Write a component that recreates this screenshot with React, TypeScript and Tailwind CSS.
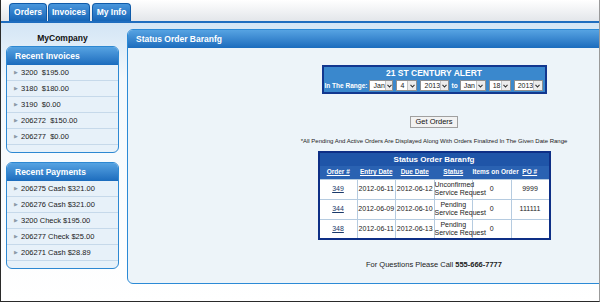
import React from 'react';

const invoices = ['3200  $195.00', '3180  $180.00', '3190  $0.00', '206272  $150.00', '206277  $0.00'];
const payments = [
  '206275 Cash $321.00',
  '206276 Cash $321.00',
  '3200 Check $195.00',
  '206277 Check $25.00',
  '206271 Cash $28.89',
];

const orders = [
  { id: '349', entry: '2012-06-11', due: '2012-06-12', status: ['Unconfirmed', 'Service Request'], items: '0', po: '9999' },
  { id: '344', entry: '2012-06-09', due: '2012-06-10', status: ['Pending', 'Service Request'], items: '0', po: '111111' },
  { id: '348', entry: '2012-06-11', due: '2012-06-13', status: ['Pending', 'Service Request'], items: '0', po: '' },
];

const SideBox: React.FC<{ title: string; items: string[] }> = ({ title, items }) => (
  <div className="rounded-[6px] border border-[#2d88d2] bg-[#e7f1f9] overflow-hidden">
    <div className="h-[18px] bg-linear-to-b from-[#56a3e2] to-[#1b6cbd] text-white font-bold text-[8.5px] leading-[18px] pl-[8px]">
      {title}
    </div>
    {items.map((item) => (
      <div key={item} className="h-[16px] border-b border-[#c6d9ea] flex items-center pl-[7px] text-[7.5px] text-[#1a1a1a] whitespace-pre">
        <span className="text-[#8c9aa6] text-[5px] mr-[3px]">▶</span>
        {item}
      </div>
    ))}
    <div className="h-[7px]" />
  </div>
);

const Select: React.FC<{ value: string; w: string }> = ({ value, w }) => (
  <span className={`${w} shrink-0 h-[11px] bg-white border border-[#8f8f8f] flex items-center text-[7px] text-[#222] font-normal`}>
    <span className="flex-1 pl-[3px] leading-none">{value}</span>
    <span className="w-[9px] h-full border-l border-[#c4c4c4] bg-[#ececec] flex items-center justify-center">
      <svg width="5" height="4" viewBox="0 0 5 4">
        <path d="M0.5 0.8 L2.5 3 L4.5 0.8" stroke="#333" strokeWidth="1.1" fill="none" />
      </svg>
    </span>
  </span>
);

export default function App() {
  return (
    <div className="w-[600px] h-[302px] overflow-hidden border-l border-b border-[#2a2a2a] border-r border-r-[#9a9a9a] bg-white font-['Liberation_Sans',Arial,sans-serif] flex flex-col">
      {/* tabs */}
      <div className="h-[21px] shrink-0 bg-linear-to-b from-white to-[#e3e6ea] flex items-end gap-[1px] pl-[8px]">
        {['Orders', 'Invoices', 'My Info'].map((t, i) => (
          <div
            key={t}
            className={`h-[18px] rounded-t-[4px] border border-b-0 border-[#0f5aa8] bg-linear-to-b from-[#4896dc] to-[#1565b7] text-white font-bold text-[8.5px] flex items-center justify-center ${
              i === 0 ? 'w-[38px]' : i === 1 ? 'w-[42px]' : 'w-[39px] ml-[1px]'
            }`}
          >
            {t}
          </div>
        ))}
      </div>
      <div className="h-[2px] shrink-0 bg-[#1e6dbf]" />

      {/* body */}
      <div className="flex-1 flex bg-linear-to-b from-[#d3e5f5] via-[#f3f8fc] via-[20%] to-white pt-[6px]">
        {/* sidebar */}
        <div className="w-[113px] ml-[5px] shrink-0">
          <div className="h-[17px] text-center font-bold text-[8.5px] text-[#111] pt-[3px]">MyCompany</div>
          <div>
            <SideBox title="Recent Invoices" items={invoices} />
          </div>
          <div className="mt-[9px]">
            <SideBox title="Recent Payments" items={payments} />
          </div>
        </div>

        {/* main panel */}
        <div className="ml-[8px] w-[614px] shrink-0 h-[255px] rounded-[6px] border border-[#2b8ad6] bg-[#edf4f9] overflow-hidden flex flex-col">
          <div className="h-[18px] shrink-0 bg-linear-to-b from-[#56a3e2] to-[#1b6cbd] text-white font-bold text-[8.5px] leading-[18px] pl-[8px]">
            Status Order Baranfg
          </div>
          <div className="flex flex-col items-center">
            {/* alert */}
            <div className="mt-[17px] w-[225px] border-2 border-[#12378f] bg-[#3a88cd] px-[1px] pb-[1px]">
              <div className="text-center text-white font-bold text-[8.5px] leading-[13px]">21 ST CENTURY ALERT</div>
              <div className="flex items-center gap-[3px] text-white font-bold text-[6.5px] whitespace-nowrap">
                <span className="mr-[-1px]">In The Range:</span>
                <Select value="Jan" w="w-[24px]" />
                <Select value="4" w="w-[21px]" />
                <Select value="2013" w="w-[29px]" />
                <span className="mx-[-1px]">to</span>
                <Select value="Jan" w="w-[26px]" />
                <Select value="18" w="w-[22px]" />
                <Select value="2013" w="w-[29px]" />
              </div>
            </div>

            <button className="mt-[22px] w-[48px] h-[12px] border border-[#a0a0a0] bg-[#f2f2f2] text-[7.5px] text-[#111] leading-none">
              Get Orders
            </button>

            <div className="mt-[10px] text-[6px] text-[#222] leading-none whitespace-nowrap">
              *All Pending And Active Orders Are Displayed Along With Orders Finalized In The Given Date Range
            </div>

            {/* orders table */}
            <table className="mt-[7px] w-[233px] table-fixed border-2 border-[#0e2f86] border-collapse text-[7px] text-[#222] whitespace-nowrap">
              <thead>
                <tr className="bg-[#1f55a8]">
                  <th colSpan={6} className="h-[14px] text-white font-bold text-[8px] text-center">
                    Status Order Baranfg
                  </th>
                </tr>
                <tr className="bg-[#2a62b2] text-white font-bold text-[6.5px] h-[13px]">
                  <th className="w-[28px] underline font-bold">Order #</th>
                  <th className="w-[41px] underline font-bold">Entry Date</th>
                  <th className="w-[37px] underline font-bold">Due Date</th>
                  <th className="w-[54px] underline font-bold">Status</th>
                  <th className="w-[50px] font-bold">Items on Order</th>
                  <th className="underline font-bold">PO #</th>
                </tr>
              </thead>
              <tbody className="bg-white">
                {orders.map((o) => (
                  <tr key={o.id} className="h-[20px]">
                    <td className="border border-[#b5cbe0] text-center underline text-[#1a3a6a]">{o.id}</td>
                    <td className="border border-[#b5cbe0] text-center">{o.entry}</td>
                    <td className="border border-[#b5cbe0] text-center">{o.due}</td>
                    <td className="border border-[#b5cbe0] text-center leading-[8px]">
                      {o.status[0]}
                      <br />
                      {o.status[1]}
                    </td>
                    <td className="border border-[#b5cbe0] text-center">{o.items}</td>
                    <td className="border border-[#b5cbe0] text-center">{o.po}</td>
                  </tr>
                ))}
              </tbody>
            </table>

            <div className="mt-[19px] text-[7.5px] text-[#222]">
              For Questions Please Call <span className="font-bold">555-666-7777</span>
            </div>
          </div>
        </div>
      </div>
    </div>
  );
}
